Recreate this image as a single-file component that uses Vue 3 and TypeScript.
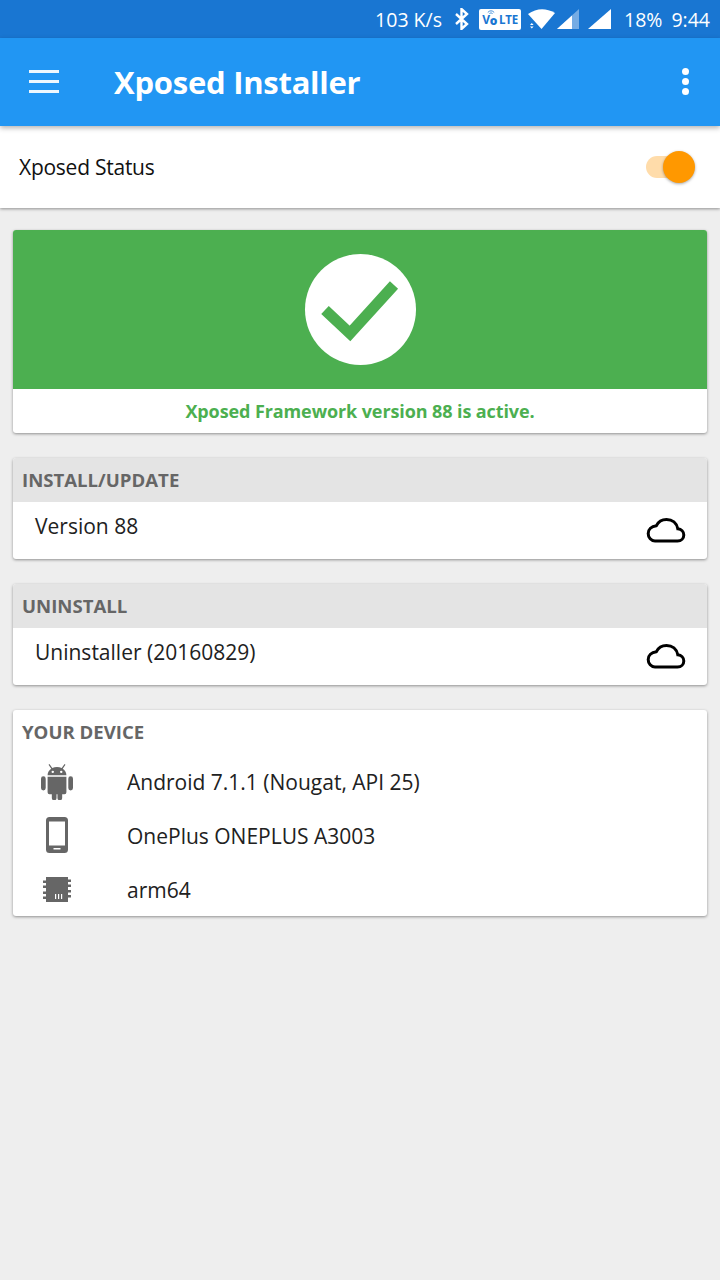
<template>
  <div class="screen">
    <div class="status-bar">
      <span class="speed">103 K/s</span>
      <svg class="bt" width="16" height="22" viewBox="0 0 16 22">
        <path d="M2 6l11 10-5.500 5V1L13 6 2 16" fill="none" stroke="#fff" stroke-width="2.400" />
      </svg>
      <span class="volte">
        <span class="vo">V<b>o</b>
          <svg class="arcs" width="10" height="6" viewBox="0 0 10 6">
            <path d="M1 3.500Q5-.5 9 3.500M3 5Q5 3 7 5" fill="none" stroke="#1976d2" stroke-width="1" />
          </svg>
        </span>
        <span class="lte">LTE</span>
      </span>
      <svg class="wifi" width="30" height="22" viewBox="0 0 30 22">
        <path d="M1 6Q14-3 28 5L14.500 21Z" fill="#fff" />
        <path d="M3 17l1.800-2 1.800 2zM3 18.500l1.800 2 1.800-2z" fill="#fff" />
      </svg>
      <svg class="signal" width="24" height="22" viewBox="0 0 24 22">
        <path d="M0 21L22 1v20z" fill="#fff" opacity=".4" />
        <path d="M0 21L15 7.400V21z" fill="#fff" />
      </svg>
      <svg class="signal2" width="24" height="22" viewBox="0 0 24 22">
        <path d="M0 21L23 1v20z" fill="#fff" />
      </svg>
      <span class="battery">18%</span>
      <span class="time">9:44</span>
    </div>

    <header class="toolbar">
      <div class="burger"><i></i><i></i><i></i></div>
      <h1>Xposed Installer</h1>
      <div class="dots"><i></i><i></i><i></i></div>
    </header>

    <div class="status-row">
      <span>Xposed Status</span>
      <div class="switch"><div class="knob"></div></div>
    </div>

    <main class="content">
      <section class="card">
        <div class="banner">
          <div class="circle">
            <svg width="80" height="64" viewBox="0 0 80 64">
              <path d="M5 32l25 23.500L74 7" fill="none" stroke="#4caf50" stroke-width="11" />
            </svg>
          </div>
        </div>
        <p class="active">Xposed Framework version 88 is active.</p>
      </section>

      <section v-for="s in downloads" :key="s.title" class="card">
        <div class="card-head">{{ s.title }}</div>
        <div class="dl-row">
          <span>{{ s.label }}</span>
          <svg width="40" height="26" viewBox="0 0 40 26">
            <path
              d="M9 24h22.500c3.800 0 6.300-2.700 6.300-6 0-3.400-2.500-5.800-6-6.200C30.700 6 26.300 2.500 20.500 2.500c-4.700 0-8.300 2.500-10.100 6.200C5.300 9.300 2.200 12.500 2.200 16.500c0 4.200 3 7.500 6.800 7.500z"
              fill="none"
              stroke="#000"
              stroke-width="3"
            />
          </svg>
        </div>
      </section>

      <section class="card device">
        <div class="device-title">YOUR DEVICE</div>
        <div class="device-row">
          <div class="ico">
            <svg width="32" height="38" viewBox="0 0 34 40">
              <path
                fill="#666"
                d="M9 2l3 4.300A11 11 0 0 1 17 5a11 11 0 0 1 5 1.300L25 2l1 .7-2.900 4.300C25.500 8.500 27 11 27 14H7c0-3 1.500-5.500 3.900-7L8 2.700zM12.500 9a1.300 1.300 0 1 0 0 2.600 1.300 1.300 0 0 0 0-2.600zm9 0a1.300 1.300 0 1 0 0 2.600 1.300 1.300 0 0 0 0-2.600zM7 15.500h20V32a2 2 0 0 1-2 2h-2.500v4a2.500 2.500 0 0 1-5 0v-4h-1v4a2.500 2.500 0 0 1-5 0v-4H9a2 2 0 0 1-2-2zM2.500 15A2.500 2.500 0 0 1 5 17.500v10a2.500 2.500 0 0 1-5 0v-10A2.500 2.500 0 0 1 2.500 15zm29 0a2.500 2.500 0 0 1 2.500 2.500v10a2.500 2.500 0 0 1-5 0v-10a2.500 2.500 0 0 1 2.500-2.500z"
              />
            </svg>
          </div>
          <span>Android 7.1.1 (Nougat, API 25)</span>
        </div>
        <div class="device-row">
          <div class="ico">
            <svg width="22" height="36" viewBox="0 0 22 36">
              <path
                fill="#666"
                fill-rule="evenodd"
                d="M3.500 0h15A3.500 3.500 0 0 1 22 3.500v29a3.500 3.500 0 0 1-3.500 3.500h-15A3.500 3.500 0 0 1 0 32.500v-29A3.500 3.500 0 0 1 3.500 0zM3 4.500V28.500h16V4.500zM7.500 31v1.600h7V31z"
              />
            </svg>
          </div>
          <span>OnePlus ONEPLUS A3003</span>
        </div>
        <div class="device-row">
          <div class="ico">
            <svg width="28" height="25" viewBox="0 0 28 25">
              <path
                fill="#666"
                fill-rule="evenodd"
                d="M3 0h22v2.500h3v2.500h-3v2.500h3v2.500h-3v3h3v2.500h-3v2.500h3v2.500h-3V25H3v-3H0v-2.500h3V17H0v-2.500h3V11H0V8.500h3V6H0V3.500h3zM12 17v5h1.200v-5zm3 0v5h1.200v-5zm3 0v5h1.200v-5z"
              />
            </svg>
          </div>
          <span>arm64</span>
        </div>
      </section>
    </main>
  </div>
</template>

<script setup lang="ts">
interface DownloadSection {
  title: string
  label: string
}

const downloads: DownloadSection[] = [
  { title: 'INSTALL/UPDATE', label: 'Version 88' },
  { title: 'UNINSTALL', label: 'Uninstaller (20160829)' }
]
</script>

<style>
html,
body {
  margin: 0;
  background: #eeeeee;
}
</style>

<style scoped>
.screen {
  width: 720px;
  height: 1280px;
  overflow: hidden;
  background: #eeeeee;
  font-family: "Open Sans", "Noto Sans", sans-serif;
  color: #212121;
}

.status-bar {
  height: 38px;
  background: #1976d2;
  color: #fff;
  display: flex;
  align-items: center;
  justify-content: flex-end;
  padding-right: 10px;
  font-size: 19.5px;
}
.speed {
  margin-right: 12px;
}
.bt {
  margin-right: 9px;
}
.volte {
  width: 42px;
  height: 21px;
  background: #fff;
  border-radius: 2px;
  color: #1976d2;
  font-size: 12px;
  font-weight: 700;
  display: flex;
  align-items: center;
  justify-content: center;
  gap: 2px;
  margin-right: 6px;
}
.vo {
  position: relative;
  letter-spacing: -0.3px;
}
.vo b {
  position: relative;
  top: 1px;
}
.arcs {
  position: absolute;
  left: 4px;
  top: -2px;
  transform: scale(0.8);
}
.lte {
  letter-spacing: -0.3px;
  font-size: 11.5px;
}
.signal {
  margin-right: 7px;
}
.signal2 {
  margin-right: 12px;
}
.battery {
  margin-right: 9px;
}

.toolbar {
  position: relative;
  z-index: 2;
  height: 88px;
  background: #2196f3;
  box-shadow: 0 2px 5px rgba(0, 0, 0, 0.3);
  display: flex;
  align-items: center;
  color: #fff;
  padding-left: 29px;
  padding-right: 31px;
}
.burger {
  width: 30px;
  display: flex;
  flex-direction: column;
  gap: 7px;
  margin-right: 55px;
  margin-top: -2px;
}
.burger i {
  display: block;
  height: 3px;
  background: #fff;
  opacity: 0.92;
}
h1 {
  flex: 1;
  margin: 0;
  font-size: 31px;
  font-weight: 700;
  line-height: 1;
  letter-spacing: -0.25px;
}
.dots {
  display: flex;
  flex-direction: column;
  gap: 3px;
  margin-top: -2px;
}
.dots i {
  display: block;
  width: 7px;
  height: 7px;
  border-radius: 50%;
  background: #fff;
}

.status-row {
  height: 82px;
  background: #fff;
  box-shadow: 0 1px 3px rgba(0, 0, 0, 0.4);
  display: flex;
  align-items: center;
  justify-content: space-between;
  padding: 0 28px 0 19px;
  font-size: 21px;
  letter-spacing: -0.25px;
  color: #111;
}
.switch {
  position: relative;
  width: 46px;
  height: 22px;
  border-radius: 11px;
  background: #ffdcaa;
}
.knob {
  position: absolute;
  right: -3px;
  top: -5px;
  width: 32px;
  height: 32px;
  border-radius: 50%;
  background: #ff9800;
  box-shadow: 0 1px 3px rgba(0, 0, 0, 0.35);
}

.content {
  padding: 22px 13px 0;
  display: flex;
  flex-direction: column;
  gap: 25px;
}
.card {
  background: #fff;
  border-radius: 3px;
  overflow: hidden;
  box-shadow: 0 1px 3px rgba(0, 0, 0, 0.4);
}
.banner {
  height: 159px;
  background: #4caf50;
  display: flex;
  align-items: center;
  justify-content: center;
}
.circle {
  width: 111px;
  height: 111px;
  border-radius: 50%;
  background: #fff;
  display: flex;
  align-items: center;
  justify-content: center;
}
.active {
  margin: 0;
  height: 44px;
  line-height: 44px;
  text-align: center;
  color: #4caf50;
  font-size: 18px;
  font-weight: 700;
  letter-spacing: -0.1px;
}
.card-head {
  height: 44px;
  line-height: 44px;
  background: #e4e4e4;
  padding-left: 9px;
  color: #666;
  font-size: 18.6px;
  font-weight: 700;
}
.dl-row {
  height: 57px;
  display: flex;
  align-items: center;
  justify-content: space-between;
  padding: 0 21px 9px 22px;
  box-sizing: border-box;
  font-size: 21px;
  color: #212121;
}
.dl-row svg {
  margin-top: 7px;
}
.device {
  height: 206px;
}
.device-title {
  height: 44px;
  line-height: 44px;
  padding-left: 9px;
  color: #666;
  font-size: 18.6px;
  font-weight: 700;
}
.device-row {
  height: 54px;
  display: flex;
  align-items: center;
  font-size: 21px;
  color: #212121;
}
.device-row span {
  margin-top: 2px;
}
.ico {
  flex: none;
  width: 88px;
  margin-right: 26px;
  display: flex;
  justify-content: center;
}
</style>
